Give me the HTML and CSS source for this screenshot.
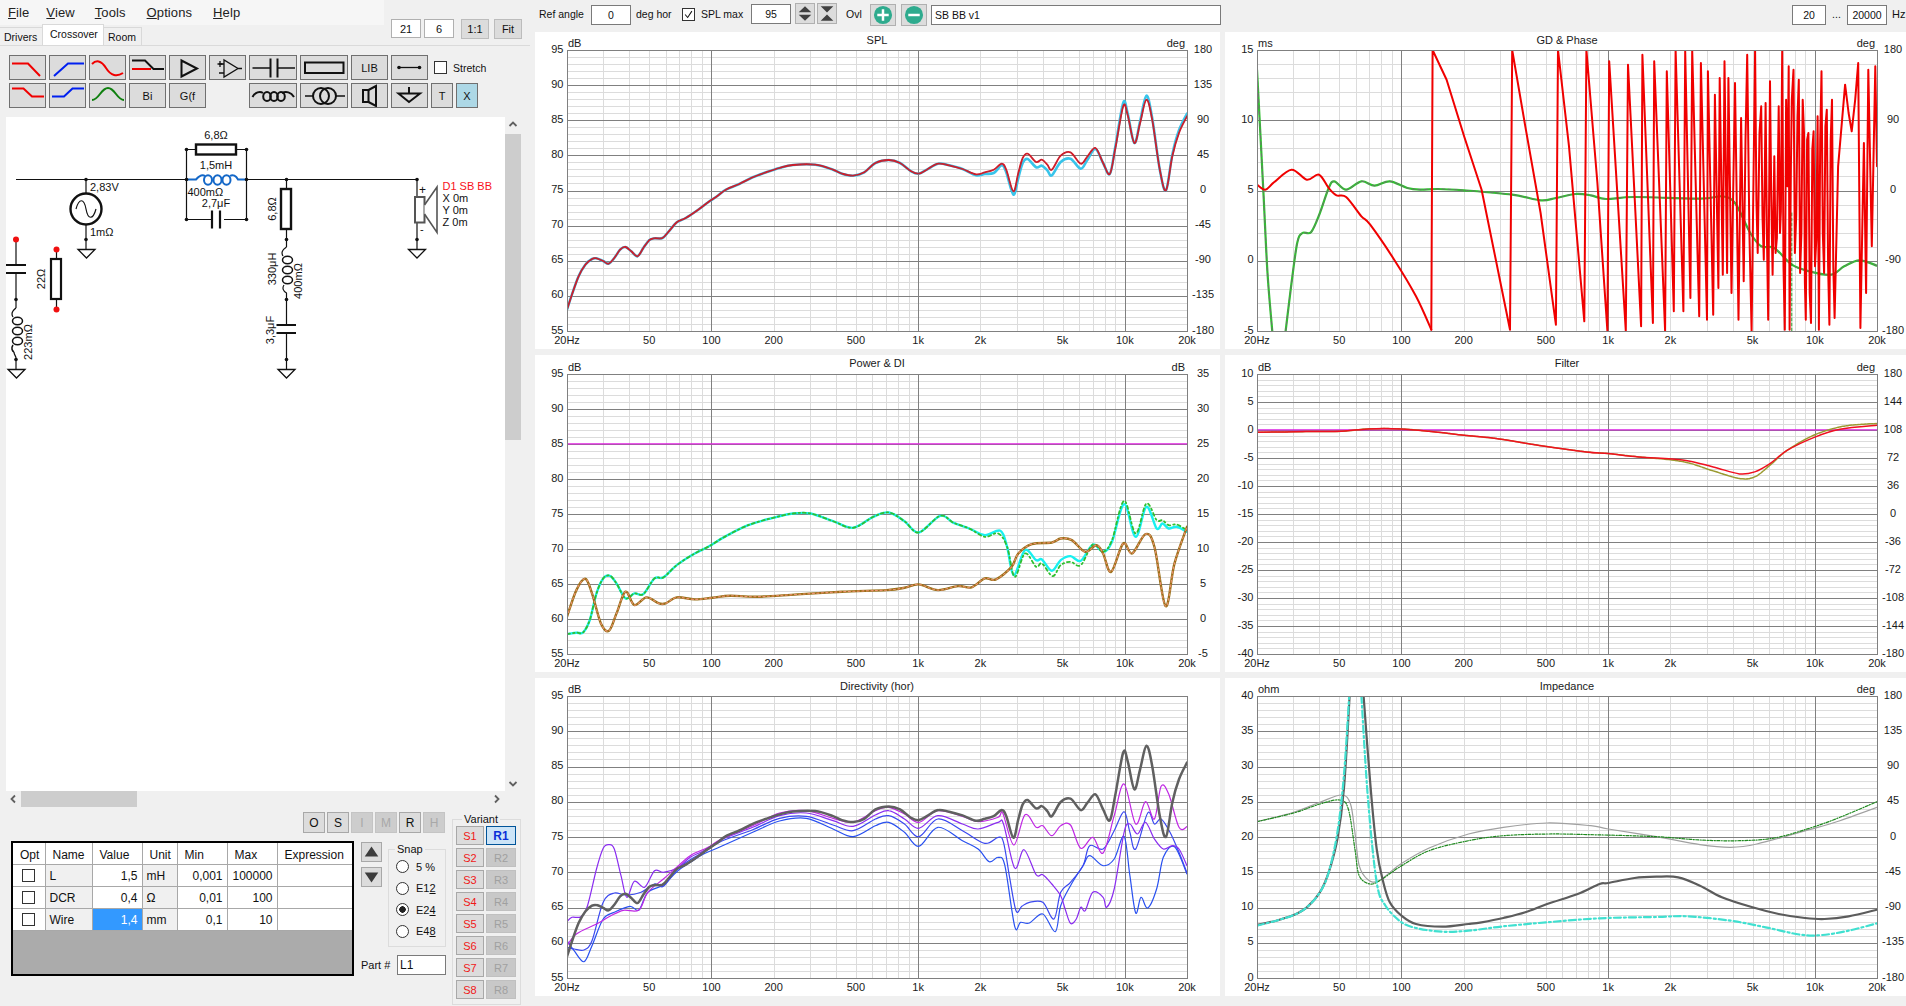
FILE: index.html
```html
<!DOCTYPE html>
<html lang="en">
<head>
<meta charset="utf-8">
<title>VituixCAD</title>
<link rel="stylesheet" href="styles.css">
</head>
<body>
<div class="app">
  <section class="left">
    <header class="head">
      <div class="head-main">
        <nav class="menu">
          <span class="m1"><u>F</u>ile</span>
          <span class="m2"><u>V</u>iew</span>
          <span class="m3"><u>T</u>ools</span>
          <span class="m4"><u>O</u>ptions</span>
          <span class="m5"><u>H</u>elp</span>
        </nav>
        <div class="tabs">
          <span class="tab tab-a">Drivers</span>
          <span class="tab tab-on">Crossover</span>
          <span class="tab tab-c">Room</span>
        </div>
      </div>
      <div class="head-tools">
        <span class="field f-a">21</span>
        <span class="field f-a">6</span>
        <button class="hbtn h-first">1:1</button>
        <button class="hbtn">Fit</button>
      </div>
    </header>

    <div class="tools">
      <div class="tool-row">
        <button class="tb"><svg viewBox="0 0 35 23"><path class="r" d="M2 7.5H18L30 20"/></svg></button>
        <button class="tb"><svg viewBox="0 0 35 23"><path class="b" d="M4 20L18 7.5H34"/></svg></button>
        <button class="tb"><svg viewBox="0 0 35 23"><path class="r" d="M2 8C6 4 11 4 16 12C21 20 27 21 33 17"/></svg></button>
        <button class="tb"><svg viewBox="0 0 35 23"><path class="k" d="M2 4.5H15L23.5 13H34"/><path class="r" d="M2 13H21"/></svg></button>
        <button class="tb"><svg viewBox="0 0 35 23"><path class="k" d="M11.5 4.5V20.5L27 12.5Z"/></svg></button>
        <button class="tb"><svg viewBox="0 0 35 23"><path class="k thin" d="M14 4V21L28 12.5ZM28 12.5H32M9 8H14M9 17H14"/><path class="k thin" d="M10 5V11M7.5 8H12.5"/></svg></button>
        <button class="tb wide"><svg viewBox="0 0 46 23"><path class="k thin" d="M2.5 12H20M27.5 12H45"/><path class="k" d="M20.5 2.500V21.500M27.500 2.500V21.500"/></svg></button>
        <button class="tb wide"><svg viewBox="0 0 46 23"><rect class="k" x="4" y="6.500" width="38.500" height="10.500"/></svg></button>
        <button class="tb">LIB</button>
        <button class="tb"><svg viewBox="0 0 35 23"><path class="k thin" d="M7 11.500H27.500"/><circle cx="7" cy="11.500" r="1.800"/><circle cx="27.500" cy="11.500" r="1.800"/></svg></button>
        <span class="cb cb-stretch"></span>
        <span class="stretch">Stretch</span>
      </div>
      <div class="tool-row">
        <button class="tb"><svg viewBox="0 0 35 23"><path class="r" d="M2 4.500H13.500L22 12.500H34"/></svg></button>
        <button class="tb"><svg viewBox="0 0 35 23"><path class="b" d="M2 12.500H14L22.500 4.500H34"/></svg></button>
        <button class="tb"><svg viewBox="0 0 35 23"><path class="g" d="M2 16C9 16 11 4 18 4C25 4 27 16 34 16"/></svg></button>
        <button class="tb">Bi</button>
        <button class="tb">G(f</button>
        <span class="tb-gap"></span>
        <button class="tb wide"><svg viewBox="0 0 46 23"><path class="k" d="M2.500 13C5 8 10 7 13 9M32 9C36 7 41 8 44 13"/><ellipse class="k" cx="17" cy="12.500" rx="3.800" ry="4.500"/><ellipse class="k" cx="24" cy="12.500" rx="3.800" ry="4.500"/><ellipse class="k" cx="31" cy="12.500" rx="3.800" ry="4.500"/></svg></button>
        <button class="tb wide"><svg viewBox="0 0 46 23"><path class="k thin" d="M4 12H12M35 12H44"/><circle class="k" cx="20" cy="12" r="8"/><circle class="k" cx="27" cy="12" r="8"/></svg></button>
        <button class="tb"><svg viewBox="0 0 35 23"><rect class="k" x="11" y="6" width="5.500" height="12"/><path class="k" d="M16.500 6L24 2V22L16.500 18"/></svg></button>
        <button class="tb"><svg viewBox="0 0 35 23"><path class="k" d="M6.500 9.500H28L17 18ZM17 3V9.500"/></svg></button>
        <button class="tb narrow">T</button>
        <button class="tb narrow on">X</button>
      </div>
    </div>

    <div class="work">
      <div class="canvas">
        <svg class="schem" viewBox="6 117 499 674">
          <g class="wire">
            <path d="M16 179.500H187M246.500 179.500H417"/>
            <path d="M86 179.500V194M86 224V249"/>
            <path d="M186.500 149.500H196M236 149.500H246.500V219.500H224M212 219.500H186.500V149.500"/>
            <path d="M286.500 179.500V189M286.500 229V247M284 285C282 288 283 291 286.500 293V325M286.500 333V369"/>
            <path d="M417 179.500V196.500M417 222V249"/>
            <path d="M16 239V265M16 273V308M14 352C14 355 16 356 16 358V369"/>
            <path d="M56.500 249V259M56.500 299V309"/>
            <path d="M286.500 247C282 250 281 253 283 256M16 308C12 311 11 314 13 317"/>
          </g>
          <circle class="part" cx="86" cy="209" r="15.500"/>
          <path class="wire" d="M76 209C79 198 84 198 86 209C88 220 93 220 96 209"/>
          <rect class="part" x="196" y="144.500" width="40" height="10"/>
          <rect class="part" x="281" y="189" width="10" height="40"/>
          <rect class="part thin" x="51" y="259" width="10" height="40"/>
          <path class="part thin" d="M212 210.500V228.500M220 210.500V228.500"/>
          <path class="part thin" d="M276.500 325H296M276.500 333H296"/>
          <path class="part thin" d="M6 265H26M6 273H26"/>
          <g class="coil-b">
            <path d="M187 179.500H196C199 176 202 174 205 176M230 176C233 174 236 176 238 179.500H246"/>
            <ellipse cx="208" cy="180" rx="4" ry="4.800"/>
            <ellipse cx="217.500" cy="180" rx="4" ry="4.800"/>
            <ellipse cx="226.500" cy="180" rx="4" ry="4.800"/>
          </g>
          <g class="coil-k">
            <ellipse cx="287.500" cy="260" rx="5" ry="3.800"/>
            <ellipse cx="287.500" cy="270" rx="5" ry="3.800"/>
            <ellipse cx="287.500" cy="280" rx="5" ry="3.800"/>
            <ellipse cx="17.500" cy="321" rx="5" ry="3.800"/>
            <ellipse cx="17.500" cy="331" rx="5" ry="3.800"/>
            <ellipse cx="17.500" cy="341" rx="5" ry="3.800"/>
            <path d="M13 345C11 348 12 351 14 352"/>
          </g>
          <g class="gnd">
            <path d="M78 249.500H95L86.500 258Z"/>
            <path d="M8 369.500H25L16.500 378Z"/>
            <path d="M278 369.500H295L286.500 378Z"/>
            <path d="M408.500 249.500H425.500L417 258Z"/>
          </g>
          <rect class="spk" x="415" y="197" width="9.500" height="25.500"/>
          <path class="spk" d="M424.500 205L437 187V232.500L424.500 214"/>
          <g class="dots">
            <circle cx="86" cy="179.500" r="1.800"/><circle cx="86" cy="239.500" r="1.800"/>
            <circle cx="186.500" cy="149.500" r="1.800"/><circle cx="246.500" cy="149.500" r="1.800"/>
            <circle cx="186.500" cy="179.500" r="1.800"/><circle cx="246.500" cy="179.500" r="1.800"/>
            <circle cx="186.500" cy="219.500" r="1.800"/><circle cx="246.500" cy="219.500" r="1.800"/>
            <circle cx="286.500" cy="179.500" r="1.800"/><circle cx="286.500" cy="239.500" r="1.800"/>
            <circle cx="286.500" cy="299.500" r="1.800"/><circle cx="286.500" cy="359.500" r="1.800"/>
            <circle cx="417" cy="179.500" r="1.800"/><circle cx="417" cy="239.500" r="1.800"/>
            <circle cx="16" cy="299.500" r="1.800"/><circle cx="16" cy="359.500" r="1.800"/>
          </g>
          <g class="dots-red">
            <circle cx="16" cy="239.500" r="3"/><circle cx="56.500" cy="249.500" r="3"/><circle cx="56.500" cy="309.500" r="3"/>
          </g>
          <g class="lbl">
            <text x="90" y="191">2,83V</text>
            <text x="90" y="236">1mΩ</text>
            <text x="216" y="139" text-anchor="middle">6,8Ω</text>
            <text x="216" y="169" text-anchor="middle">1,5mH</text>
            <text x="187.500" y="196">400mΩ</text>
            <text x="216" y="207" text-anchor="middle">2,7μF</text>
            <text transform="translate(275.500 209) rotate(-90)" text-anchor="middle">6,8Ω</text>
            <text transform="translate(275.500 269) rotate(-90)" text-anchor="middle">330μH</text>
            <text transform="translate(301.500 281) rotate(-90)" text-anchor="middle">400mΩ</text>
            <text transform="translate(273.500 330) rotate(-90)" text-anchor="middle">3,3μF</text>
            <text transform="translate(32 342) rotate(-90)" text-anchor="middle">223mΩ</text>
            <text transform="translate(44.500 279) rotate(-90)" text-anchor="middle">22Ω</text>
            <text x="419" y="194" class="lbl-pm">+</text>
            <text x="420" y="233">-</text>
            <text x="442.500" y="190" class="lbl-red">D1 SB BB</text>
            <text x="442.500" y="202">X 0m</text>
            <text x="442.500" y="214">Y 0m</text>
            <text x="442.500" y="226">Z 0m</text>
          </g>
        </svg>
      </div>
      <div class="vbar">
        <svg class="chev" viewBox="0 0 16 14"><path d="M4.500 9L8 5.500L11.500 9"/></svg>
        <div class="vthumb"></div>
        <svg class="chev chev-end" viewBox="0 0 16 14"><path d="M4.500 5L8 8.500L11.500 5"/></svg>
      </div>
      <div class="hbar">
        <svg class="chev-h" viewBox="0 0 14 16"><path d="M9 4.500L5.500 8L9 11.500"/></svg>
        <div class="hthumb"></div>
        <svg class="chev-h chev-end-h" viewBox="0 0 14 16"><path d="M5 4.500L8.500 8L5 11.500"/></svg>
      </div>
    </div>

    <div class="bottom">
      <div class="bottom-main">
        <div class="opbar">
          <button class="op">O</button><button class="op">S</button>
          <button class="op off">I</button><button class="op off">M</button>
          <button class="op">R</button><button class="op off">H</button>
        </div>
        <div class="edit">
          <div class="tablebox">
            <table class="params">
              <colgroup><col class="c1"><col class="c2"><col class="c3"><col class="c4"><col class="c5"><col class="c6"><col class="c7"></colgroup>
              <tr><th>Opt</th><th>Name</th><th>Value</th><th>Unit</th><th>Min</th><th>Max</th><th>Expression</th></tr>
              <tr><td class="mid"><span class="cb"></span></td><td class="ro">L</td><td class="num">1,5</td><td class="ro">mH</td><td class="num">0,001</td><td class="num">100000</td><td></td></tr>
              <tr><td class="mid"><span class="cb"></span></td><td class="ro">DCR</td><td class="num">0,4</td><td class="ro">Ω</td><td class="num">0,01</td><td class="num">100</td><td></td></tr>
              <tr><td class="mid"><span class="cb"></span></td><td class="ro">Wire</td><td class="num sel">1,4</td><td class="ro">mm</td><td class="num">0,1</td><td class="num">10</td><td></td></tr>
            </table>
          </div>
          <div class="side">
            <div class="side-top">
              <div class="arrows">
                <button class="arrow"><svg viewBox="0 0 21 20"><path d="M10.500 4L18 15H3Z"/></svg></button>
                <button class="arrow"><svg viewBox="0 0 21 20"><path d="M3 5H18L10.500 16Z"/></svg></button>
              </div>
              <fieldset class="snap">
                <legend>Snap</legend>
                <label class="rad"><span class="dot"></span><span>5 %</span></label>
                <label class="rad"><span class="dot"></span><span>E1<u>2</u></span></label>
                <label class="rad"><span class="dot dot-on"></span><span>E2<u>4</u></span></label>
                <label class="rad"><span class="dot"></span><span>E4<u>8</u></span></label>
              </fieldset>
            </div>
            <div class="part-row"><span>Part #</span><span class="field f-part">L1</span></div>
          </div>
        </div>
      </div>
      <fieldset class="variant">
        <legend>Variant</legend>
        <div class="vgrid">
          <button class="vs">S1</button><button class="vr vr-on">R1</button>
          <button class="vs">S2</button><button class="vr">R2</button>
          <button class="vs">S3</button><button class="vr">R3</button>
          <button class="vs">S4</button><button class="vr">R4</button>
          <button class="vs">S5</button><button class="vr">R5</button>
          <button class="vs">S6</button><button class="vr">R6</button>
          <button class="vs">S7</button><button class="vr">R7</button>
          <button class="vs">S8</button><button class="vr">R8</button>
        </div>
      </fieldset>
    </div>
  </section>

  <section class="right">
    <div class="topbar">
      <span class="t-ref">Ref angle</span>
      <span class="field f-angle">0</span>
      <span class="t-deg">deg hor</span>
      <span class="cb cb-on"><svg viewBox="0 0 13 13"><path d="M2.500 6.500L5.500 10L10.500 2.500"/></svg></span>
      <span class="t-spl">SPL max</span>
      <span class="field f-max">95</span>
      <button class="spin spin-a"><svg viewBox="0 0 20 20"><path d="M10 2L17 8.500H3ZM3 11.500H17L10 18Z"/></svg></button>
      <button class="spin"><svg viewBox="0 0 20 20"><path d="M3 2H17L10 9ZM10 11L17 18H3Z"/></svg></button>
      <span class="t-ovl">Ovl</span>
      <button class="ovl ovl-a"><svg viewBox="0 0 25 21"><circle cx="12.500" cy="10.500" r="9.500"/><path d="M6.500 10.500H18.500M12.500 4.500V16.500"/></svg></button>
      <button class="ovl"><svg viewBox="0 0 25 21"><circle cx="12.500" cy="10.500" r="9.500"/><path d="M6.500 10.500H18.500"/></svg></button>
      <span class="field f-name">SB BB v1</span>
      <span class="range">
        <span class="field f-lo">20</span>
        <span class="t-dots">...</span>
        <span class="field f-hi">20000</span>
        <span class="t-hz">Hz</span>
      </span>
    </div>
    <div class="charts">
      <figure class="chart" id="spl"></figure>
      <figure class="chart" id="gd"></figure>
      <figure class="chart" id="power"></figure>
      <figure class="chart" id="filter"></figure>
      <figure class="chart" id="dir"></figure>
      <figure class="chart" id="imp"></figure>
    </div>
  </section>
</div>
<script src="charts.js"></script>
</body>
</html>
```
FILE: styles.css
```css
* { box-sizing: border-box; }
html, body { margin: 0; padding: 0; }
body {
  width: 1906px; height: 1006px; overflow: hidden;
  background: #f0f0f0; color: #111;
  font: 11px "Liberation Sans", Arial, sans-serif;
}
button { font: inherit; color: #111; padding: 0; margin: 0; }
svg { display: block; }
.app { display: grid; grid-template-columns: 530px 1376px; height: 1006px; }

/* head */
.left { display: flex; flex-direction: column; min-width: 0; }
.head { display: flex; height: 45px; flex: none; }
.head-main { width: 384px; }
.menu { height: 25px; background: #f6f6f6; display: flex; font-size: 13px; letter-spacing: 0.1px; padding: 5px 0 0 8px; color: #222; }
.m2 { margin-left: 17px; } .m3 { margin-left: 20px; } .m4 { margin-left: 21px; } .m5 { margin-left: 21px; }
.tabs { display: flex; height: 20px; align-items: flex-end; font-size: 10.500px; }
.tab { display: flex; align-items: center; height: 18px; border: 1px solid #d9d9d9; border-bottom: 0; background: #f0f0f0; }
.tab-a { width: 42px; padding-left: 4px; border-left: 0; border-right: 0; }
.tab-on { width: 62px; height: 21px; padding-left: 7px; background: #fff; padding-bottom: 2px; }
.tab-c { width: 38px; padding-left: 4px; border-left: 0; }
.head-tools { display: flex; padding: 19px 0 0 7px; height: 40px; }
.field { display: flex; align-items: center; background: #fff; border: 1px solid #7a7a7a; height: 19px; font-size: 11px; }
.f-a { width: 30px; margin-right: 3px; justify-content: center; border-color: #b0b0b0; }
.hbtn { width: 28px; height: 20px; background: #dcdcdc; border: 1px solid #bcbcbc; margin-left: 5px; }
.h-first { margin-left: 4px; }

/* toolbar */
.tools { height: 72px; flex: none; border-top: 1px solid #dadada; padding: 9px 0 0 9px; }
.tool-row { display: flex; gap: 3px; height: 25px; margin-bottom: 3px; align-items: center; }
.tb { width: 37px; height: 25px; background: #dcdcdc; border: 1px solid #707070; display: flex; align-items: center; justify-content: center; flex: none; }
.tb svg { width: 100%; height: 100%; }
.tb.wide { width: 48px; }
.tb.narrow { width: 22px; }
.tb.on { background: #add8e6; }
.tb-gap { width: 37px; flex: none; }
.tb path, .tb rect, .tb circle, .tb ellipse { fill: none; stroke-width: 2; }
.tb svg circle[r="1.800"] { fill: #111; stroke: none; }
.r { stroke: #f00000; } .b { stroke: #0020f0; } .g { stroke: #108010; }
.k { stroke: #111; } .k.thin { stroke-width: 1.3; }
.tb .thin { stroke-width: 1.3; }
.cb { display: inline-block; width: 13px; height: 13px; background: #fff; border: 1px solid #333; flex: none; }
.cb-stretch { margin-left: 3px; }
.stretch { margin-left: 3px; font-size: 10.500px; }

/* schematic */
.work { display: grid; grid-template-columns: 499px 16px; grid-template-rows: 674px 16px; margin-left: 6px; flex: none; }
.canvas { background: #fff; overflow: hidden; }
.schem { width: 499px; height: 674px; }
.wire { fill: none; stroke: #111; stroke-width: 1.200; }
.part { fill: #fff; stroke: #111; stroke-width: 2.400; }
.part.thin { stroke-width: 2.200; fill: #fff; }
.coil-b { fill: none; stroke: #1468c8; stroke-width: 2; }
.coil-k { fill: none; stroke: #111; stroke-width: 1.500; }
.gnd { fill: #fff; stroke: #111; stroke-width: 1.300; }
.spk { fill: #fff; stroke: #111; stroke-width: 1.200; }
rect.spk { stroke: #555; stroke-width: 2; }
path.spk { stroke: #555; stroke-width: 1.600; }
.dots circle { fill: #111; }
.dots-red circle { fill: #f01010; }
.lbl text { font: 11px "Liberation Sans", Arial, sans-serif; fill: #111; }
.lbl .lbl-red { fill: #f81020; }
.lbl .lbl-pm { font-size: 12px; }
.vbar { grid-row: 1; grid-column: 2; background: #f0f0f0; display: flex; flex-direction: column; }
.chev { width: 16px; height: 14px; flex: none; margin-top: 0; }
.chev path, .chev-h path { fill: none; stroke: #606060; stroke-width: 1.800; }
.vthumb { width: 16px; height: 306px; background: #cdcdcd; margin-top: 3px; }
.chev-end { margin-top: auto; }
.hbar { grid-row: 2; grid-column: 1; display: flex; align-items: center; background: #f0f0f0; }
.chev-h { width: 14px; height: 16px; flex: none; }
.hthumb { width: 116px; height: 16px; background: #cdcdcd; margin-left: 1px; }
.chev-end-h { margin-left: auto; margin-right: 1px; }

/* bottom */
.bottom { display: flex; padding-left: 11px; flex: none; height: 199px; }
.bottom-main { width: 434px; padding-top: 5px; }
.opbar { display: flex; justify-content: flex-end; gap: 2px; height: 21px; }
.op { width: 22px; height: 21px; background: #dcdcdc; border: 1px solid #a8a8a8; font-size: 12px; }
.op.off { background: #cdcdcd; color: #a8a8a8; border-color: #c4c4c4; }
.edit { display: flex; margin-top: 8px; }
.tablebox { width: 343px; height: 135px; border: 2px solid #000; background: #ababab; overflow: hidden; flex: none; }
.params { border-collapse: collapse; table-layout: fixed; width: 339px; margin-top: 0; font-size: 12px; background: #fff; }
.params th, .params td { border: 1px solid #a8a8a8; height: 22px; padding: 2px 4px 0; font-weight: 400; overflow: hidden; white-space: nowrap; }
.params tr:first-child th { border-top: 0; height: 21px; background: #fff; text-align: left; padding: 3px 0 0 7px; }
.params th:first-child, .params td:first-child { border-left: 0; }
.params th:last-child, .params td:last-child { border-right: 0; }
.c1 { width: 32px; } .c2 { width: 47px; } .c3 { width: 50px; } .c4 { width: 35px; } .c5 { width: 50px; } .c6 { width: 50px; } .c7 { width: 75px; }
.params td.mid { text-align: center; padding: 0; }
.mid .cb { vertical-align: middle; }
.ro { background: #f0f0f0; }
.num { text-align: right; }
.sel { background: #3399ff; color: #fff; }
.side { width: 85px; margin-left: 7px; flex: none; }
.side-top { display: flex; height: 106px; }
.arrows { width: 21px; flex: none; padding-top: 1px; }
.arrow { display: block; width: 21px; height: 20px; background: #dcdcdc; border: 1px solid #a8a8a8; margin-bottom: 5px; }
.arrow svg { width: 100%; height: 100%; }
.arrow path { fill: #3c3c3c; }
fieldset { margin: 0; border: 1px solid #dcdcdc; }
legend { padding: 0 2px; font-size: 11px; }
.snap { width: 58px; height: 104px; margin: 2px 0 0 6px; padding: 1px 0 0 7px; }
.snap legend { margin-left: -1px; }
.rad { display: flex; align-items: center; gap: 7px; height: 21.500px; font-size: 11px; }
.dot { width: 13px; height: 13px; border: 1px solid #333; border-radius: 50%; background: #fff; flex: none; display: block; }
.dot-on { background: radial-gradient(circle, #222 0 3px, #fff 3.500px); }
.part-row { display: flex; align-items: center; justify-content: space-between; margin-top: 8px; height: 20px; font-size: 11px; }
.f-part { width: 49px; height: 20px; padding-left: 2px; font-size: 12px; }
.variant { width: 69px; height: 192px; margin: 6px 0 0 7px; padding: 0 0 0 3px; }
.variant legend { margin-left: 6px; }
.vgrid { display: grid; grid-template-columns: 28px 30px; grid-auto-rows: 19px; gap: 3px 2px; margin-top: 1px; }
.vs { background: #dcdcdc; border: 1px solid #a8a8a8; color: #f01818; }
.vr { background: #c8c8c8; border: 1px solid #c0c0c0; color: #a0a0a0; }
.vr-on { background: #cce4f7; border-color: #005499; color: #0a2fd8; font-weight: 700; font-size: 12px; }

/* right */
.right { display: flex; flex-direction: column; min-width: 0; }
.topbar { height: 32px; flex: none; display: flex; align-items: flex-start; font-size: 10.500px; padding-left: 9px; }
.topbar > span:not(.field):not(.cb):not(.range), .range > span:not(.field) { margin-top: 8px; }
.topbar .field { margin-top: 5px; font-size: 10.500px; height: 19.500px; }
.t-ref { width: 52px; }
.f-angle { width: 40px; justify-content: center; }
.t-deg { margin-left: 5px; width: 46px; }
.cb-on { width: 13px; height: 13px; margin-top: 8px; }
.cb-on path { fill: none; stroke: #111; stroke-width: 1.200; }
.t-spl { margin-left: 6px; width: 50px; }
.topbar .f-max { width: 40px; justify-content: center; margin-top: 4px; }
.spin { width: 20px; height: 21px; background: #dcdcdc; border: 1px solid #b0b0b0; margin-top: 3px; }
.spin path { fill: #404040; }
.spin svg { width: 100%; height: 100%; }
.spin-a { margin-left: 4px; margin-right: 2px; }
.t-ovl { margin-left: 9px; width: 24px; }
.ovl { width: 26px; height: 22px; background: #dcdcdc; border: 1px solid #b0b0b0; margin-top: 4px; }
.ovl-a { margin-right: 5px; }
.ovl svg { width: 100%; height: 100%; }
.ovl circle { fill: #2eab8e; }
.ovl path { stroke: #fff; stroke-width: 2.600; fill: none; }
.f-name { width: 290px; margin-left: 4px; padding-left: 3px; }
.range { display: flex; margin-left: auto; width: 114px; }
.f-lo { width: 34px; justify-content: center; }
.f-hi { width: 40px; justify-content: center; }
.t-dots { width: 21px; text-align: center; }
.t-hz { margin-left: 5px; font-size: 11px; }
.charts { display: grid; grid-template-columns: 685px 681px; grid-template-rows: 317px 317px 318px; column-gap: 5px; row-gap: 6px; margin-left: 5px; }
.chart { margin: 0; background: #fff; overflow: hidden; }
.chart svg { width: 100%; height: 100%; }
.chart text { font: 11px "Liberation Sans", Arial, sans-serif; fill: #1a1a1a; }
.gmin { stroke: #dcdcdc; stroke-width: 1; }
.gmaj { stroke: #808080; stroke-width: 1; }
.frame { fill: none; stroke: #808080; stroke-width: 1; }
.trace { fill: none; stroke-linejoin: round; stroke-linecap: round; }
```
FILE: charts.js
```js
(function () {
  var NS = 'http://www.w3.org/2000/svg';
  var MAJ = [100, 1000, 10000];
  var FX = [[20, '20Hz'], [50, '50'], [100, '100'], [200, '200'], [500, '500'], [1000, '1k'], [2000, '2k'], [5000, '5k'], [10000, '10k'], [20000, '20k']];

  // Boxes: the four edges of each plot in the coordinate frame the traces were read in.
  var L1 = [84, 1473, 151, 994], R1 = [86, 1505, 151, 994];
  var L2 = [84, 1473, 71, 912], R2 = [86, 1505, 71, 912];
  var L3 = [84, 1473, 61, 907], R3 = [86, 1505, 61, 907];

  var splLow = [[84,930],[95,885],[110,830],[125,795],[140,778],[150,776],[165,784],[177,792],[190,775],[203,750],[215,742],[228,755],[242,770],[255,745],[268,722],[280,716],[298,715],[312,695],[330,668],[350,655],[378,630],[400,608],[420,590],[440,570],[470,553],[500,533],[530,518],[560,505],[590,496],[640,495],[680,510],[700,522],[725,528],[750,518],[775,490],[805,481],[830,490],[855,515],[872,522],[890,510],[915,492],[940,497],[970,508]];
  var splRed = splLow.concat([[1000,524],[1020,518],[1040,510],[1058,492],[1068,510],[1084,575],[1095,520],[1105,475],[1116,462],[1135,487],[1148,480],[1160,495],[1170,510],[1190,468],[1212,458],[1235,492],[1250,470],[1268,445],[1285,490],[1300,523],[1312,450],[1330,320],[1340,345],[1355,430],[1368,370],[1382,300],[1395,360],[1412,510],[1426,572],[1440,470],[1455,400],[1473,350]]);
  var splCyan = splLow.concat([[1000,527],[1020,523],[1040,520],[1058,497],[1068,518],[1084,585],[1095,535],[1105,490],[1116,478],[1135,503],[1148,498],[1160,512],[1170,527],[1190,487],[1212,477],[1235,507],[1250,480],[1268,448],[1285,490],[1300,523],[1312,445],[1330,310],[1340,340],[1355,430],[1368,365],[1382,288],[1395,355],[1412,510],[1426,572],[1440,465],[1455,392],[1473,342]]);

  var dirM = [[84,810],[105,775],[150,745],[180,722],[210,704],[245,703],[265,650],[300,610],[330,575],[360,540],[400,515],[430,490],[500,450],[560,412],[620,405],[680,428],[725,440],[775,405],[805,395],[840,415],[872,440],[915,405],[970,422],[1005,438],[1050,425],[1060,412],[1085,508],[1110,417],[1135,455],[1150,450],[1170,480],[1190,450],[1212,448],[1235,518],[1262,485],[1285,532],[1310,420],[1332,325],[1358,445],[1380,378],[1400,430],[1415,332],[1432,355],[1455,455],[1473,453]];
  var dirP = [[84,738],[95,725],[115,723],[130,690],[150,580],[165,518],[178,507],[190,520],[205,600],[218,665],[235,617],[258,635],[280,585],[300,590],[330,578],[360,545],[390,525],[430,492],[500,455],[560,420],[620,412],[680,435],[725,452],[775,418],[805,405],[840,430],[872,458],[915,420],[970,445],[1005,460],[1050,440],[1062,445],[1087,577],[1108,522],[1135,597],[1150,597],[1170,625],[1190,660],[1200,700],[1212,743],[1225,730],[1235,695],[1245,705],[1262,650],[1285,665],[1293,695],[1310,640],[1332,470],[1345,445],[1362,475],[1380,440],[1400,490],[1420,520],[1440,510],[1455,520],[1473,570]];
  var dirB = [[84,815],[100,820],[122,823],[140,795],[165,680],[190,652],[215,658],[250,650],[280,625],[300,632],[330,582],[360,552],[390,530],[430,497],[500,462],[560,428],[620,422],[680,448],[725,465],[775,430],[805,420],[840,445],[872,483],[915,430],[970,465],[1020,503],[1050,485],[1062,500],[1075,600],[1090,705],[1103,692],[1120,680],[1150,680],[1175,730],[1190,650],[1212,620],[1240,570],[1255,510],[1285,520],[1310,465],[1332,408],[1345,470],[1358,520],[1385,412],[1400,445],[1415,430],[1435,470],[1455,530],[1473,592]];
  var dirC = [[84,795],[100,825],[122,858],[140,810],[165,730],[190,710],[225,692],[245,703],[265,650],[300,628],[330,588],[360,560],[390,535],[430,512],[500,470],[560,436],[620,428],[680,460],[725,483],[775,450],[805,440],[840,470],[872,512],[915,455],[970,495],[1005,520],[1030,558],[1050,545],[1065,570],[1087,752],[1100,740],[1120,742],[1150,715],[1178,768],[1190,690],[1212,630],[1240,570],[1255,540],[1285,570],[1310,550],[1332,482],[1345,600],[1358,712],[1370,665],[1385,697],[1405,640],[1420,545],[1445,513],[1473,595]];

  var pCyan = [[84,852],[105,848],[120,847],[135,810],[150,730],[165,685],[180,677],[195,700],[215,745],[235,730],[255,732],[280,685],[300,682],[330,645],[370,610],[400,590],[440,558],[490,525],[540,505],[590,490],[630,490],[680,513],[725,533],[770,500],[805,487],[840,513],[872,547],[920,497],[950,518],[985,535],[1020,555],[1055,542],[1070,590],[1085,675],[1110,600],[1135,630],[1148,628],[1170,662],[1190,630],[1212,618],[1235,632],[1262,583],[1285,605],[1305,575],[1332,462],[1358,560],[1382,470],[1405,535],[1418,520],[1432,535],[1450,530],[1473,545]];
  var pGreen = pCyan.slice(0, 30).concat([[1020,560],[1050,550],[1070,590],[1087,680],[1110,610],[1135,650],[1148,640],[1172,678],[1190,645],[1212,635],[1235,645],[1262,583],[1285,605],[1305,570],[1332,452],[1358,550],[1382,460],[1405,510],[1418,510],[1432,525],[1450,523],[1473,540]]);
  var pBrown = [[84,800],[105,720],[125,686],[140,730],[160,820],[178,842],[195,790],[215,725],[235,765],[262,742],[290,760],[305,760],[330,742],[370,748],[410,743],[450,737],[510,740],[600,733],[700,725],[800,720],[840,713],[872,703],[915,720],[960,708],[990,712],[1020,685],[1045,688],[1080,650],[1095,610],[1125,582],[1170,577],[1190,565],[1215,570],[1245,605],[1270,585],[1285,610],[1303,665],[1330,580],[1350,610],[1380,552],[1400,590],[1425,768],[1445,640],[1473,530]];

  var fRed = [[86,246],[200,244],[280,243],[340,236],[415,236],[480,243],[560,255],[640,266],[740,287],[840,305],[890,310],[960,320],[1060,329],[1130,350],[1190,371],[1225,365],[1260,340],[1300,300],[1360,262],[1420,237],[1505,225]];
  var fOlive = fRed.slice(0, 12).concat([[1060,334],[1130,362],[1190,385],[1225,380],[1260,345],[1300,300],[1360,255],[1420,230],[1470,222],[1505,220]]);

  var zA = [[86,748],[130,735],[170,718],[200,695],[230,650],[250,590],[270,490],[285,340],[298,61]];
  var zB = [[330,61],[345,320],[360,520],[375,620],[390,680],[415,718],[450,745],[510,753],[570,745],[600,740],[650,727],[700,710],[750,685],[820,655],[870,625],[890,622],[950,607],[1000,603],[1050,605],[1100,630],[1150,665],[1220,695],[1280,715],[1340,727],[1385,730],[1440,722],[1505,702]];
  var cA = [[86,750],[130,735],[170,718],[200,695],[230,650],[250,590],[270,470],[285,300],[297,61]];
  var cB = [[325,61],[340,370],[360,620],[380,690],[415,738],[450,757],[510,768],[570,765],[650,752],[750,740],[870,728],[1000,724],[1070,722],[1170,735],[1250,755],[1330,777],[1380,778],[1440,765],[1505,743]];
  var phGray = [[86,438],[170,410],[230,380],[280,358],[300,385],[310,470],[320,570],[340,612],[365,615],[415,565],[480,517],[570,475],[650,455],[750,442],[850,450],[890,460],[1000,483],[1100,507],[1170,515],[1230,505],[1350,462],[1420,435],[1505,395]];
  var phGreen = [[86,438],[170,412],[230,385],[275,373],[295,400],[310,520],[320,600],[345,625],[370,612],[415,572],[480,525],[570,495],[650,480],[750,475],[850,477],[1000,483],[1100,493],[1190,495],[1270,487],[1350,458],[1420,425],[1505,378]];

  var gdA = [[86,210],[100,560],[110,820],[122,1010]];
  var gdB = [[150,1010],[165,850],[178,730],[190,700],[210,697],[230,640],[250,565],[263,545],[290,570],[325,545],[355,558],[390,545],[430,565],[460,570],[500,568],[560,572],[670,585],[735,602],[770,595],[815,583],[850,587],[885,598],[950,592],[1100,597],[1150,590],[1180,610],[1215,700],[1240,740],[1270,745],[1310,795],[1350,815],[1400,825],[1430,800],[1465,782],[1505,798]];
  var phLow = [[86,555],[105,570],[125,548],[165,510],[200,540],[228,525],[250,565],[268,587],[290,592],[325,650],[345,675],[400,780],[450,890],[485,990]];
  var saw = [[485,990],[488,151],[520,240],[560,410],[600,570],[665,990],[670,151],[700,380],[735,640],[770,975],[775,151],[800,440],[835,965],[840,151],[865,550],[888,994],[892,185],[930,994],[935,195],[965,980],[968,165],[992,970],[995,185],[1020,994],[1024,215],[1040,935],[1044,151],[1062,935],[1066,155],[1078,895],[1082,151],[1098,950],[1102,190],[1116,960],[1118,215],[1130,945],[1134,285],[1142,865],[1145,235],[1152,825],[1156,185],[1162,820],[1165,235],[1172,880],[1180,250],[1188,960],[1194,355],[1200,845],[1204,420],[1208,165],[1213,700],[1218,994],[1226,151],[1229,600],[1232,760],[1236,400],[1240,320],[1243,650],[1246,780],[1250,310],[1253,700],[1256,960],[1260,245],[1263,600],[1266,825],[1270,470],[1273,760],[1276,715],[1280,320],[1283,700],[1285,635],[1288,155],[1291,800],[1294,990],[1297,300],[1300,560],[1303,200],[1305,990],[1308,500],[1310,300],[1314,210],[1317,760],[1320,650],[1323,350],[1326,240],[1329,820],[1332,700],[1335,300],[1338,400],[1340,850],[1342,960],[1345,420],[1348,400],[1351,880],[1354,970],[1357,450],[1360,395],[1363,800],[1366,720],[1369,350],[1372,990],[1375,420],[1378,215],[1381,700],[1384,820],[1387,380],[1390,330],[1393,800],[1396,975],[1399,420],[1402,300],[1405,800],[1408,955],[1416,500],[1432,255],[1440,340],[1447,395],[1455,300],[1462,190],[1467,985],[1475,430],[1480,880],[1485,210],[1493,740],[1501,200],[1505,500]];

  function t(pts, box, opt) { return Object.assign({ pts: pts, box: box }, opt); }

  var DASH = '7 3 2 3';
  var charts = [
    { id: 'spl', title: 'SPL', top: 18, bottom: 299, uL: 'dB', uR: 'deg', left: [95,90,85,80,75,70,65,60,55], right: [180,135,90,45,0,-45,-90,-135,-180],
      traces: [
        t(splCyan, L1, { c: '#38c4ea', w: 2.6 }),
        t(splRed, L1, { c: '#e8101c', w: 1.8 }),
        t(splRed, L1, { c: '#506070', w: 1, d: '3 2', o: 0.45 })
      ] },
    { id: 'gd', title: 'GD & Phase', top: 18, bottom: 299, uL: 'ms', uR: 'deg', left: [15,10,5,0,-5], right: [180,90,0,-90,-180],
      traces: [
        t(gdA, R1, { c: '#30c030', w: 2.2 }), t(gdB, R1, { c: '#30c030', w: 2.2 }),
        t(gdA, R1, { c: '#707070', w: 1, d: '3 3' }), t(gdB, R1, { c: '#707070', w: 1, d: '3 3' }),
        t([[1310,640],[1310,994]], R1, { c: '#209020', w: 1, d: '3 2' }),
        t(phLow, R1, { c: '#f00000', w: 2 }),
        t(saw, R1, { c: '#f00000', w: 2, straight: true })
      ] },
    { id: 'power', title: 'Power & DI', top: 19, bottom: 299, uL: 'dB', uR: 'dB', left: [95,90,85,80,75,70,65,60,55], right: [35,30,25,20,15,10,5,0,-5],
      traces: [
        t([[84,281],[1473,281]], L2, { c: '#e020e0', w: 1.4, straight: true }),
        t(pCyan, L2, { c: '#18f0f0', w: 2.4 }),
        t(pGreen, L2, { c: '#30c030', w: 1.8, d: '3 3 1.500 3' }),
        t(pBrown, L2, { c: '#987018', w: 2.400 }),
        t(pBrown, L2, { c: '#f09070', w: 1.100, d: '2 2.500' })
      ] },
    { id: 'filter', title: 'Filter', top: 19, bottom: 299, uL: 'dB', uR: 'deg', left: [10,5,0,-5,-10,-15,-20,-25,-30,-35,-40], right: [180,144,108,72,36,0,-36,-72,-108,-144,-180],
      traces: [
        t([[86,239],[1505,239]], R2, { c: '#d820e0', w: 1.2, straight: true }),
        t(fOlive, R2, { c: '#9a9a30', w: 1.500, d: '2.500 1' }),
        t(fRed, R2, { c: '#f01020', w: 1.500 })
      ] },
    { id: 'dir', title: 'Directivity (hor)', top: 18, bottom: 300, uL: 'dB', uR: '', left: [95,90,85,80,75,70,65,60,55], right: [],
      traces: [
        t(dirC, L3, { c: '#2850f0', w: 1.2 }),
        t(dirB, L3, { c: '#3a48f0', w: 1.2 }),
        t(dirP, L3, { c: '#8a2cf0', w: 1.2 }),
        t(dirM, L3, { c: '#c028e4', w: 1.2 }),
        t(splRed, L1, { c: '#606060', w: 2.500 })
      ] },
    { id: 'imp', title: 'Impedance', top: 18, bottom: 300, uL: 'ohm', uR: 'deg', left: [40,35,30,25,20,15,10,5,0], right: [180,135,90,45,0,-45,-90,-135,-180],
      traces: [
        t(phGray, R3, { c: '#a0a0a0', w: 1.2 }),
        t(phGreen, R3, { c: '#1f8a1f', w: 1.2, d: '3 1.500 1 1.500' }),
        t(zA, R3, { c: '#5c5c5c', w: 2.2 }), t(zB, R3, { c: '#5c5c5c', w: 2.2 }),
        t(cA, R3, { c: '#40e0d0', w: 2.2, d: DASH }), t(cB, R3, { c: '#40e0d0', w: 2.2, d: DASH })
      ] }
  ];

  function el(name, attrs, parent) {
    var e = document.createElementNS(NS, name);
    for (var k in attrs) e.setAttribute(k, attrs[k]);
    if (parent) parent.appendChild(e);
    return e;
  }
  function text(parent, x, y, str, anchor) {
    var e = el('text', { x: x, y: y, 'text-anchor': anchor || 'start' }, parent);
    e.textContent = str;
  }
  function pathOf(p, straight) {
    var d = 'M' + p[0][0].toFixed(1) + ' ' + p[0][1].toFixed(1);
    if (straight || p.length < 3) {
      for (var i = 1; i < p.length; i++) d += 'L' + p[i][0].toFixed(1) + ' ' + p[i][1].toFixed(1);
      return d;
    }
    for (var j = 0; j < p.length - 1; j++) {
      var a = p[j - 1] || p[j], b = p[j], c = p[j + 1], e = p[j + 2] || c;
      d += 'C' + (b[0] + (c[0] - a[0]) / 6).toFixed(1) + ' ' + (b[1] + (c[1] - a[1]) / 6).toFixed(1) + ' ' +
        (c[0] - (e[0] - b[0]) / 6).toFixed(1) + ' ' + (c[1] - (e[1] - b[1]) / 6).toFixed(1) + ' ' +
        c[0].toFixed(1) + ' ' + c[1].toFixed(1);
    }
    return d;
  }

  charts.forEach(function (ch) {
    var host = document.getElementById(ch.id);
    var W = host.clientWidth, H = host.clientHeight;
    var x0 = 32, x1 = 652, y0 = ch.top, y1 = ch.bottom;
    var svg = el('svg', { viewBox: '0 0 ' + W + ' ' + H }, host);
    var X = function (f) { return x0 + (Math.log(f / 20) / Math.log(1000)) * (x1 - x0); };
    var px = function (v) { return Math.round(v) + 0.5; };

    var majors = ch.left.length - 1;
    for (var i = 0; i < majors; i++) {
      for (var m = 1; m < 5; m++) {
        var y = px(y0 + (y1 - y0) * (i + m / 5) / majors);
        el('line', { 'class': 'gmin', x1: x0, x2: x1, y1: y, y2: y }, svg);
      }
    }
    for (var dec = 10; dec <= 10000; dec *= 10) {
      for (var k = 1; k <= 9; k++) {
        var f = dec * k;
        if (f <= 20 || f >= 20000 || MAJ.indexOf(f) >= 0) continue;
        var x = px(X(f));
        el('line', { 'class': 'gmin', x1: x, x2: x, y1: y0, y2: y1 }, svg);
      }
    }
    for (var q = 1; q < majors; q++) {
      var yy = px(y0 + (y1 - y0) * q / majors);
      el('line', { 'class': 'gmaj', x1: x0, x2: x1, y1: yy, y2: yy }, svg);
    }
    MAJ.forEach(function (f) {
      var x = px(X(f));
      el('line', { 'class': 'gmaj', x1: x, x2: x, y1: y0, y2: y1 }, svg);
    });

    var clipId = 'clip-' + ch.id;
    var cp = el('clipPath', { id: clipId }, el('defs', {}, svg));
    el('rect', { x: x0, y: y0, width: x1 - x0, height: y1 - y0 }, cp);
    var g = el('g', { 'clip-path': 'url(#' + clipId + ')' }, svg);
    ch.traces.forEach(function (tr) {
      var b = tr.box;
      var pts = tr.pts.map(function (p) {
        return [x0 + (p[0] - b[0]) / (b[1] - b[0]) * (x1 - x0), y0 + (p[1] - b[2]) / (b[3] - b[2]) * (y1 - y0)];
      });
      var a = { 'class': 'trace', d: pathOf(pts, tr.straight), stroke: tr.c, 'stroke-width': tr.w };
      if (tr.d) a['stroke-dasharray'] = tr.d;
      if (tr.o) a['stroke-opacity'] = tr.o;
      el('path', a, g);
    });
    el('rect', { 'class': 'frame', x: x0 + 0.5, y: y0 + 0.5, width: x1 - x0, height: y1 - y0 }, svg);

    text(svg, (x0 + x1) / 2, 12, ch.title, 'middle');
    text(svg, x0 + 1, y0 - 3, ch.uL);
    if (ch.uR) text(svg, x1 - 2, y0 - 3, ch.uR, 'end');
    ch.left.forEach(function (v, i) {
      text(svg, x0 - 3.5, y0 + (y1 - y0) * i / majors + 2.5, String(v), 'end');
    });
    ch.right.forEach(function (v, i) {
      text(svg, x1 + 16, y0 + (y1 - y0) * i / majors + 2.5, String(v), 'middle');
    });
    FX.forEach(function (fx) {
      text(svg, X(fx[0]), y1 + 13, fx[1], 'middle');
    });
  });
})();
```
